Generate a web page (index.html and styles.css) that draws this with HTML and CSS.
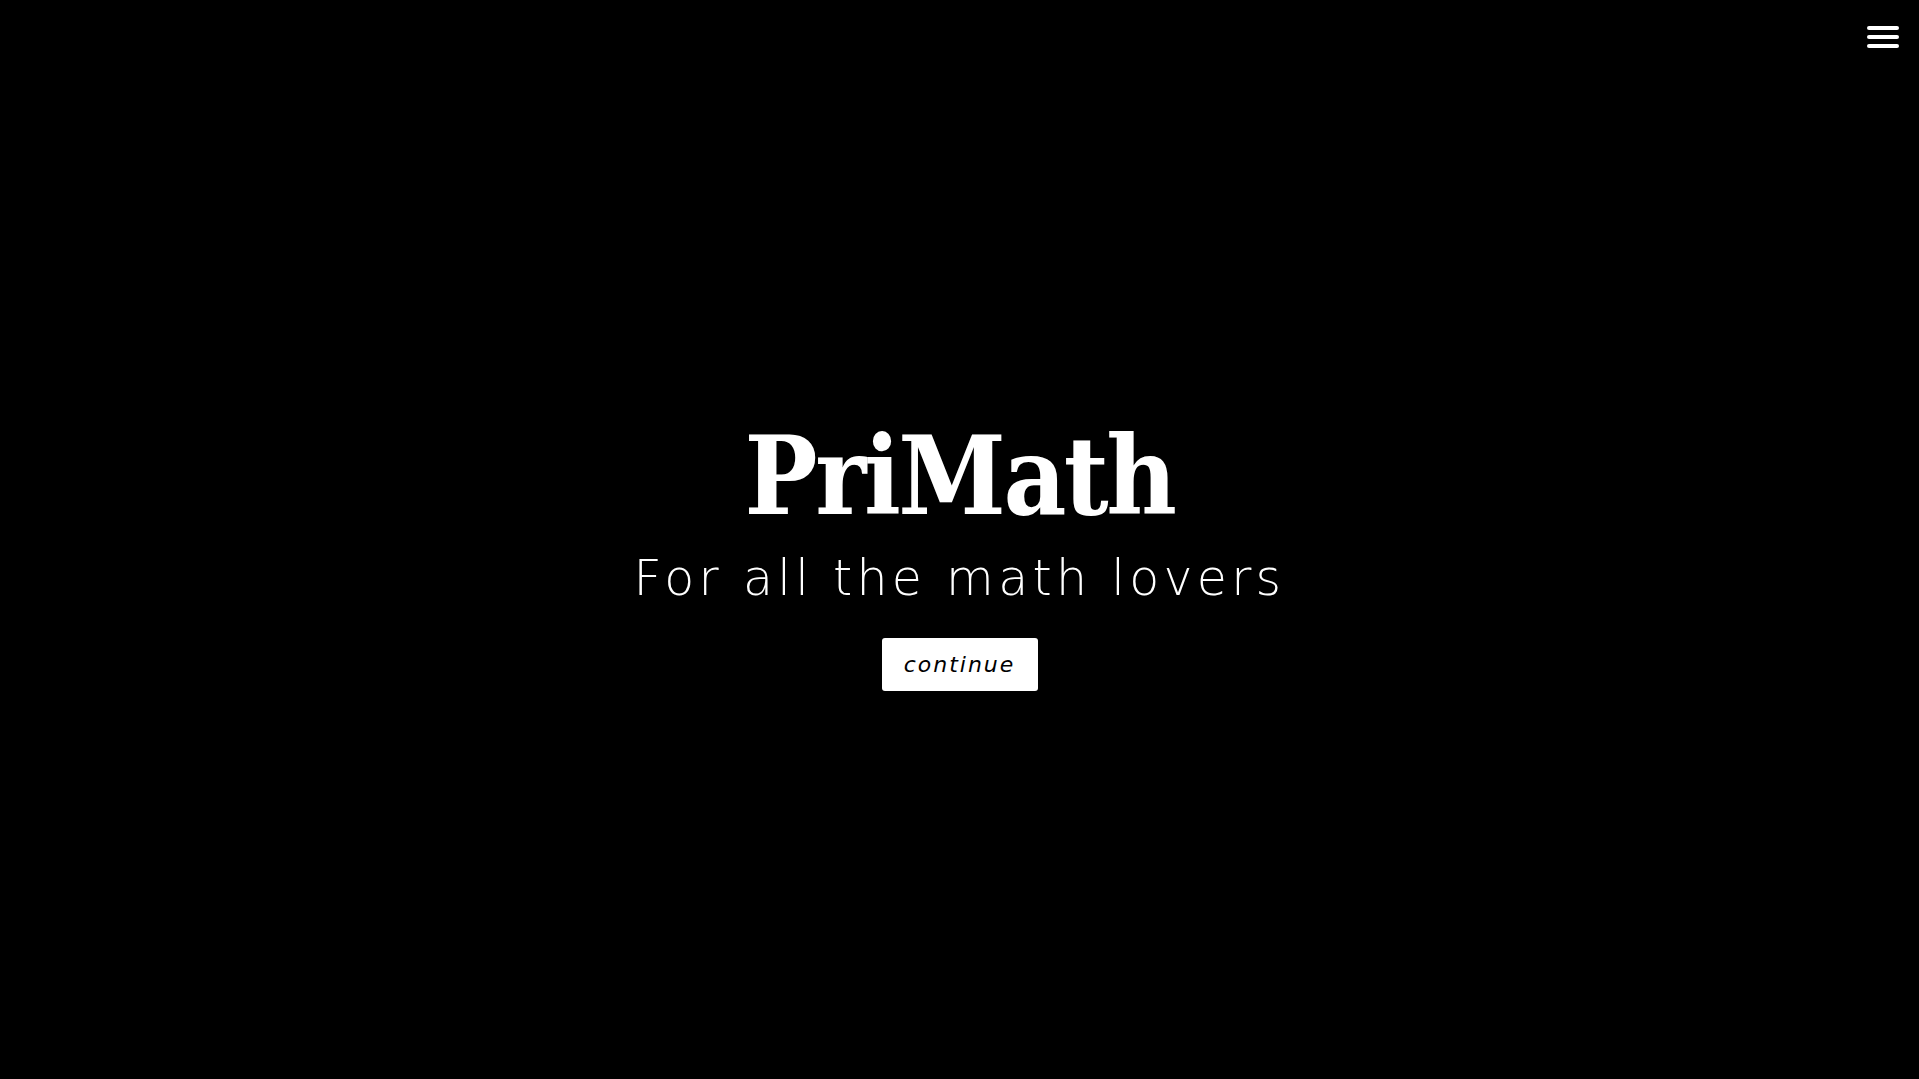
FILE: index.html
```html
<!DOCTYPE html>
<html lang="en">
<head>
<meta charset="utf-8">
<title>PriMath</title>
<link rel="stylesheet" href="styles.css">
</head>
<body>
<button class="menu" aria-label="Menu">
  <span class="bar"></span><span class="bar"></span><span class="bar"></span>
</button>
<main class="hero">
  <h1 class="title">PriMath</h1>
  <p class="subtitle">For all the math lovers</p>
  <button class="continue">continue</button>
</main>
</body>
</html>
```
FILE: styles.css
```css
html, body {
  margin: 0;
  padding: 0;
  height: 100%;
  background: #000;
  color: #fff;
}
body {
  position: relative;
  overflow: hidden;
}
.menu {
  position: absolute;
  top: 26px;
  right: 20px;
  width: 32px;
  padding: 0;
  border: 0;
  background: transparent;
  display: flex;
  flex-direction: column;
  gap: 5px;
  cursor: pointer;
}
.bar {
  display: block;
  width: 32px;
  height: 4px;
  border-radius: 2px;
  background: #fff;
}
.hero {
  height: 100%;
  display: flex;
  flex-direction: column;
  align-items: center;
  justify-content: center;
  padding-top: 34px;
  box-sizing: border-box;
}
.title {
  margin: 0 0 4px;
  font-family: "DejaVu Serif", serif;
  font-stretch: condensed;
  font-weight: 700;
  font-size: 108px;
  line-height: 1;
  letter-spacing: -2.5px;
}
.subtitle {
  margin: 16px 0 0;
  font-family: "DejaVu Sans", sans-serif;
  font-weight: 200;
  font-size: 49px;
  line-height: 1.2;
  letter-spacing: 4.3px;
}
.continue {
  margin-top: 29px;
  width: 156px;
  height: 53px;
  border: 0;
  border-radius: 3px;
  background: #fff;
  color: #000;
  font-family: "DejaVu Sans", sans-serif;
  font-style: italic;
  font-size: 22px;
  letter-spacing: 2px;
  cursor: pointer;
}
```
